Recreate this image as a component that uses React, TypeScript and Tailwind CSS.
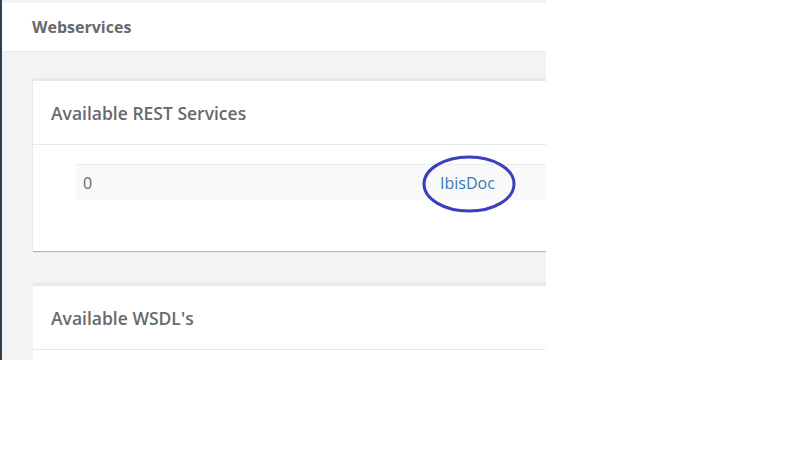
const services = [{ id: "0", name: "IbisDoc" }];

export default function App() {
  return (
    <div className="h-[466px] w-[807px] bg-white font-['Open_Sans',sans-serif] text-[#676a6c]">
      <div className="flex h-[360px] w-[546px] overflow-hidden bg-[#f3f3f4]">
        <div className="w-[2px] shrink-0 bg-[#2f4050]" />
        <div className="min-w-0 flex-1 pt-[3px]">
          <div className="flex h-[49px] w-[800px] items-center border-b border-[#e7eaec] bg-white pl-[30px] text-[16px] font-bold">
            Webservices
          </div>

          <div className="w-[800px] pl-[31px] pt-[26px]">
            <div className="relative bg-white shadow-[0_1px_1px_rgba(0,0,0,0.25)]">
              <div className="flex h-[67px] items-center border-b border-t-[3px] border-[#e7eaec] pl-[18px] pt-[2px] text-[17.5px] font-semibold">
                Available REST Services
              </div>
              <div className="pb-[51px] pl-[43px] pt-[19px]">
                {services.map((s) => (
                  <div
                    key={s.id}
                    className="flex h-[36px] items-center border-t border-[#e7eaec] bg-[#f9f9f9] text-[16px]"
                  >
                    <span className="w-[364px] pl-[7px]">{s.id}</span>
                    <span className="relative text-[#337ab7]">
                      {s.name}
                      <svg
                        className="absolute left-[-18px] top-[-16px]"
                        width="94"
                        height="58"
                        viewBox="0 0 94 58"
                      >
                        <ellipse
                          cx="47"
                          cy="29"
                          rx="45"
                          ry="27"
                          fill="none"
                          stroke="#3b3fbf"
                          strokeWidth="3"
                        />
                      </svg>
                    </span>
                  </div>
                ))}
              </div>
            </div>

            <div className="mt-[32px] bg-white">
              <div className="flex h-[67px] items-center border-b border-t-[3px] border-[#e7eaec] pl-[18px] pt-[2px] text-[17.5px] font-semibold">
                Available WSDL's
              </div>
              <div className="h-[40px]" />
            </div>
          </div>
        </div>
      </div>
    </div>
  );
}
